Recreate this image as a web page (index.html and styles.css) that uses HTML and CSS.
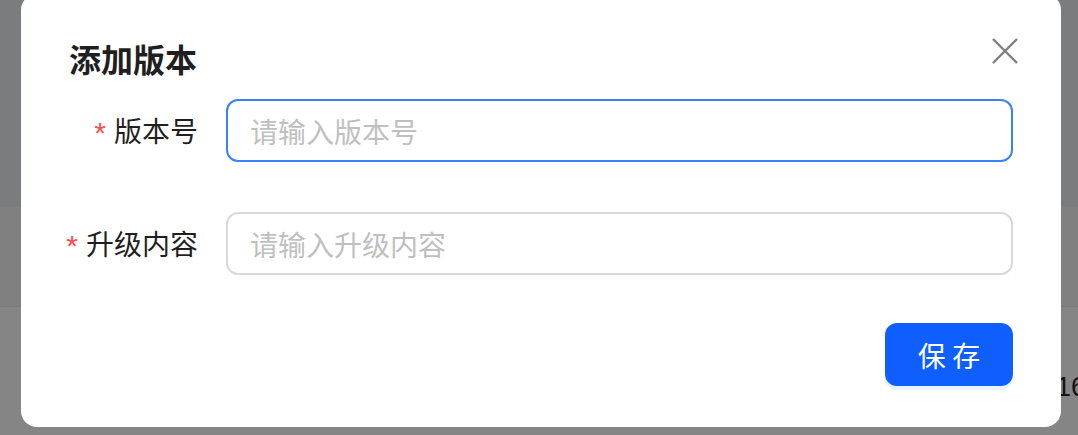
FILE: index.html
```html
<!DOCTYPE html>
<html lang="zh-CN">
<head>
    <meta charset="UTF-8">
    <meta name="viewport" content="width=device-width, initial-scale=1.0">
    <title>添加版本</title>
    <link rel="stylesheet" href="styles.css">
</head>
<body>
    <div class="page">
        <div class="page-top"></div>
        <div class="page-thead"></div>
        <div class="page-row"><span class="page-cell">16</span></div>
    </div>

    <div class="modal">
        <button type="button" class="modal-close" aria-label="关闭">
            <svg xmlns="http://www.w3.org/2000/svg" width="26" height="26" viewBox="0 0 26 26" fill="none" stroke="#7f7f7f" stroke-width="2.4" stroke-linecap="butt"><line x1="1" y1="1" x2="25" y2="25"/><line x1="25" y1="1" x2="1" y2="25"/></svg>
        </button>
        <div class="modal-title">添加版本</div>
        <form class="form" autocomplete="off">
            <div class="form-item">
                <label class="form-label required" for="version">版本号</label>
                <div class="form-control">
                    <input type="text" class="input-field is-focus" id="version" placeholder="请输入版本号">
                </div>
            </div>
            <div class="form-item">
                <label class="form-label required" for="content">升级内容</label>
                <div class="form-control">
                    <input type="text" class="input-field" id="content" placeholder="请输入升级内容">
                </div>
            </div>
            <div class="form-footer">
                <button type="submit" class="btn">保 存</button>
            </div>
        </form>
    </div>
</body>
</html>
```

FILE: styles.css
```css
:root {
    --primary: #0f5fff;
    --focus: #3d80f5;
    --border: #d9d9d9;
    --text: #1f1f1f;
    --placeholder: #bfbfbf;
    --danger: #ff4d4f;
}
html, body {
    margin: 0;
    padding: 0;
    height: 100%;
    overflow: hidden;
    font-family: "Noto Sans CJK SC", "Noto Sans", sans-serif;
}
body {
    position: relative;
    background: #858585;
}

/* page behind the mask */
.page-top {
    height: 207px;
    background: #7b7c7e;
}
.page-thead {
    height: 99px;
    background: #808080;
    border-bottom: 1px solid #7a7a7a;
}
.page-row {
    height: 128px;
    background: #858585;
    padding-left: 1056px;
    padding-top: 60px;
    box-sizing: border-box;
    white-space: nowrap;
}
.page-cell {
    font-family: "Liberation Sans", Arial, sans-serif;
    font-size: 27px;
    line-height: 40px;
    color: #141414;
}

/* modal */
.modal {
    position: absolute;
    left: 21px;
    top: -6px;
    width: 1040px;
    box-sizing: border-box;
    padding: 40px 48px 41px 48px;
    background: #fff;
    border-radius: 16px;
}
.modal-close {
    position: absolute;
    right: 42px;
    top: 43px;
    width: 28px;
    height: 28px;
    padding: 0;
    border: none;
    background: none;
    cursor: pointer;
    display: flex;
    align-items: center;
    justify-content: center;
}
.modal-title {
    font-size: 32px;
    line-height: 48px;
    font-weight: 600;
    color: var(--text);
    margin-bottom: 17px;
}
.form-item {
    display: flex;
    align-items: center;
    margin-bottom: 50px;
}
.form-item:nth-last-child(2) {
    margin-bottom: 48px;
}
.form-label {
    width: 157px;
    flex: none;
    box-sizing: border-box;
    padding-right: 28px;
    display: flex;
    justify-content: flex-end;
    align-items: center;
    white-space: nowrap;
    font-size: 28px;
    line-height: 63px;
    color: var(--text);
}
.form-label.required::before {
    content: "*";
    margin-right: 8px;
    margin-top: 4px;
    color: var(--danger);
    font-family: "Liberation Sans", Arial, sans-serif;
    font-size: 30px;
    line-height: 30px;
}
.form-control {
    flex: 1;
}
.input-field {
    display: block;
    width: 100%;
    height: 63px;
    box-sizing: border-box;
    padding: 0 22px;
    border: 2px solid var(--border);
    border-radius: 12px;
    font-family: inherit;
    font-size: 28px;
    color: var(--text);
    background: #fff;
    outline: none;
}
.input-field::placeholder {
    color: var(--placeholder);
}
.input-field.is-focus,
.input-field:focus {
    border-color: var(--focus);
}
.form-footer {
    display: flex;
    justify-content: flex-end;
}
.btn {
    width: 128px;
    height: 63px;
    border: none;
    border-radius: 12px;
    background: var(--primary);
    color: #fff;
    font-family: inherit;
    font-size: 28px;
    box-shadow: 0 4px 0 rgba(5, 145, 255, 0.1);
    cursor: pointer;
}
```
